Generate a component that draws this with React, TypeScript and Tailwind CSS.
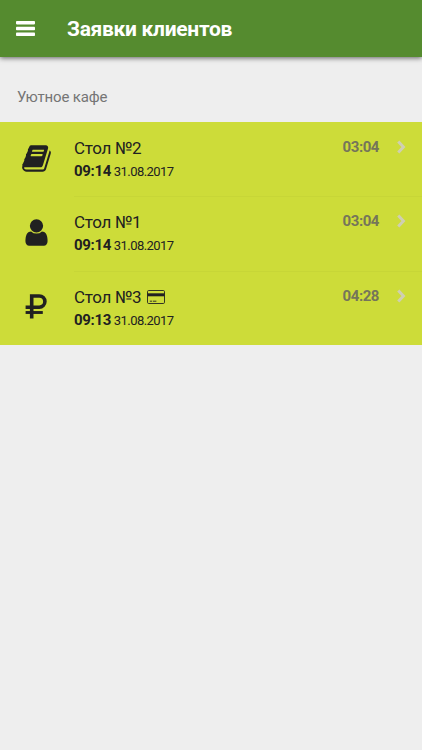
import type { ReactNode } from "react";

const BookIcon = () => (
  <svg viewBox="0 0 1792 1792" className="size-[31px]" fill="currentColor">
    <path d="M1703 478q40 57 18 129l-275 906q-19 64-76.5 107.5t-122.5 43.5h-923q-77 0-148.5-53.5t-99.5-131.5q-24-67-2-127 0-4 3-27t4-37q1-8-3-21.5t-3-19.5q2-11 8-21t16.5-23.5 16.5-23.5q23-38 45-91.5t30-91.5q3-10 .5-30t-.5-28q3-11 17-28t17-23q21-36 42-92t25-90q1-9-2.5-32t.5-28q4-13 22-30.5t22-22.5q19-26 42.5-84.5t27.5-96.5q1-8-3-25.5t-2-26.5q2-8 9-18t18-23 17-21q8-12 16.5-30.5t15-35 16-36 19.5-32 26.5-23.5 36-11.5 47.5 5.5l-1 3q38-9 51-9h761q74 0 114 56t18 130l-274 906q-36 119-71.5 153.5t-128.5 34.5h-869q-27 0-38 15-11 16-1 43 24 70 144 70h923q29 0 56-15.5t35-41.5l300-987q7-22 5-57 38 15 59 43zm-1064 2q-4 13 2 22.5t20 9.5h608q13 0 25.5-9.5t16.5-22.5l21-64q4-13-2-22.5t-20-9.5h-608q-13 0-25.5 9.5t-16.5 22.5zm-83 256q-4 13 2 22.5t20 9.5h608q13 0 25.5-9.5t16.5-22.5l21-64q4-13-2-22.5t-20-9.5h-608q-13 0-25.5 9.5t-16.5 22.5z" />
  </svg>
);

const UserIcon = () => (
  <svg viewBox="0 0 1792 1792" className="size-[31px]" fill="currentColor">
    <path d="M1536 1399q0 109-62.5 187t-150.5 78h-854q-88 0-150.5-78t-62.5-187q0-85 8.5-160.5t31.5-152 58.5-131 94-89 134.5-34.5q131 128 313 128t313-128q76 0 134.5 34.5t94 89 58.5 131 31.5 152 8.5 160.5zm-256-887q0 159-112.5 271.5t-271.5 112.5-271.5-112.5-112.5-271.5 112.5-271.5 271.5-112.5 271.5 112.5 112.5 271.5z" />
  </svg>
);

const RubleIcon = () => (
  <svg viewBox="0 0 31 31" className="size-[31px]" fill="none" stroke="currentColor">
    <path d="M10.7 27.4V5h7.6a5.6 5.6 0 0 1 0 11.2H4.6" strokeWidth="3.6" />
    <path d="M4.6 21.5h17.2" strokeWidth="2.9" />
  </svg>
);

const CardIcon = () => (
  <svg viewBox="0 0 18 14" className="w-[18px] h-[14px]" fill="none" stroke="currentColor">
    <rect x=".5" y=".5" width="17" height="13" rx="1.2" strokeWidth=".9" />
    <path d="M.5 4.8h17" strokeWidth="3" />
    <path d="M2.8 11.2h2.2M5.8 11.2h3.6" strokeWidth=".9" />
  </svg>
);

const Chevron = () => (
  <svg viewBox="0 0 9 14" className="w-[9px] h-[14px]" fill="none" stroke="#cfcfb2">
    <path d="M1.3 1.5 6.4 7l-5.1 5.5" strokeWidth="3" />
  </svg>
);

type Order = { icon: ReactNode; table: string; time: string; left: string; card?: boolean };

const orders: Order[] = [
  { icon: <BookIcon />, table: "Стол №2", time: "09:14", left: "03:04" },
  { icon: <UserIcon />, table: "Стол №1", time: "09:14", left: "03:04" },
  { icon: <RubleIcon />, table: "Стол №3", time: "09:13", left: "04:28", card: true },
];

export default function App() {
  return (
    <div className="flex h-[750px] w-[422px] flex-col bg-[#eeeeee] font-['Roboto',sans-serif] text-[#212121]">
      <header className="flex h-[57px] shrink-0 items-center bg-[#558b2f] pl-4 text-white shadow-[0_1px_5px_rgba(0,0,0,0.6)]">
        <svg viewBox="0 0 19 15" className="mr-8 h-[15px] w-[19px]" fill="currentColor">
          <rect width="19" height="3.4" rx=".8" />
          <rect y="5.8" width="19" height="3.4" rx=".8" />
          <rect y="11.6" width="19" height="3.4" rx=".8" />
        </svg>
        <h1 className="text-[21px] leading-[28px] font-bold tracking-[-0.31px]">Заявки клиентов</h1>
      </header>
      <h2 className="pt-[30px] pl-[17px] text-[15px] leading-[20px] tracking-[-0.18px] text-[#757575]">Уютное кафе</h2>
      <ul className="mt-[15px] bg-[#cddc39] pb-[0.3px]">
        {orders.map((o, i) => (
          <li key={o.table} className="flex h-[74.4px]">
            <div className="w-[74px] pt-[20.5px] pl-[21px]">{o.icon}</div>
            <div className={`flex flex-1 border-t pt-[14px] ${i > 0 ? "border-[#c7d637]" : "border-transparent"}`}>
              <div className="flex-1">
                <div className="flex items-center gap-[6px] text-[17px] leading-[22px] tracking-[-0.32px]">
                  {o.table}
                  {o.card && <CardIcon />}
                </div>
                <div className="text-[13px] leading-[24px] tracking-[-0.56px]">
                  <b className="text-[15px] tracking-[-0.3px]">{o.time}</b> 31.08.2017
                </div>
              </div>
              <div className="mr-[18px] text-[15px] leading-[20px] font-bold tracking-[-0.45px] text-[#75755a]">{o.left}</div>
              <div className="mr-4 pt-[3px]"><Chevron /></div>
            </div>
          </li>
        ))}
      </ul>
    </div>
  );
}
